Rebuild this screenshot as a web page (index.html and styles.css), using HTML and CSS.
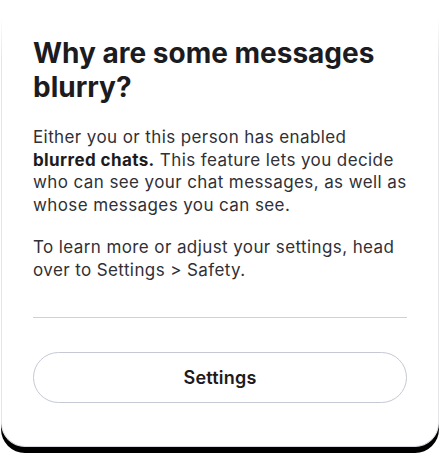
FILE: index.html
```html
<!DOCTYPE html>
<html lang="en">
<head>
<meta charset="utf-8">
<title>Why are some messages blurry?</title>
<link rel="stylesheet" href="styles.css">
</head>
<body>
<div class="card">
  <h1 class="title">Why are some messages blurry?</h1>
  <p class="text">Either you or this person has enabled <strong>blurred chats.</strong> This feature lets you decide who can see your chat messages, as well as whose messages you can see.</p>
  <p class="text second">To learn more or adjust your settings, head over to Settings &gt; Safety.</p>
  <hr class="divider">
  <button class="btn" type="button">Settings</button>
</div>
</body>
</html>
```
FILE: styles.css
```css
html, body {
  margin: 0;
  padding: 0;
  background: #ffffff;
}
body {
  font-family: Inter, "Noto Sans", sans-serif;
  width: 440px;
  height: 455px;
  overflow: hidden;
}
.card {
  position: relative;
  box-sizing: border-box;
  width: 438px;
  margin-left: 1px;
  padding: 36px 31px 43px 31px;
  background: #ffffff;
  border-left: 1px solid #e4e4ea;
  border-right: 1px solid #e4e4ea;
  border-bottom: 1px solid #d8d8de;
  border-radius: 0 0 24px 24px;
  box-shadow: 0 6px 0 #000000;
}
.card::before,
.card::after {
  content: "";
  position: absolute;
  top: 0;
  width: 3px;
  height: 60px;
  background: linear-gradient(#ffffff 30%, rgba(255,255,255,0));
}
.card::before { left: -2px; }
.card::after { right: -2px; }
.title {
  margin: 0;
  font-size: 28px;
  line-height: 34px;
  font-weight: 700;
  color: #1b1b20;
}
.text {
  margin: 22px 0 0 0;
  font-size: 17px;
  line-height: 22.5px;
  letter-spacing: 0.4px;
  color: #303036;
}
.text strong {
  font-weight: 700;
  color: #1b1b20;
}
.text.second {
  margin-top: 20px;
}
.divider {
  margin: 36px 0 0 0;
  border: 0;
  height: 1px;
  background: #cfd0d8;
}
.btn {
  display: block;
  box-sizing: border-box;
  width: 100%;
  height: 51px;
  margin-top: 34px;
  border: 1px solid #c6c8d4;
  border-radius: 26px;
  background: #ffffff;
  font-family: Inter, "Noto Sans", sans-serif;
  font-size: 18px;
  letter-spacing: 0.2px;
  font-weight: 600;
  color: #1b1b20;
}
```
